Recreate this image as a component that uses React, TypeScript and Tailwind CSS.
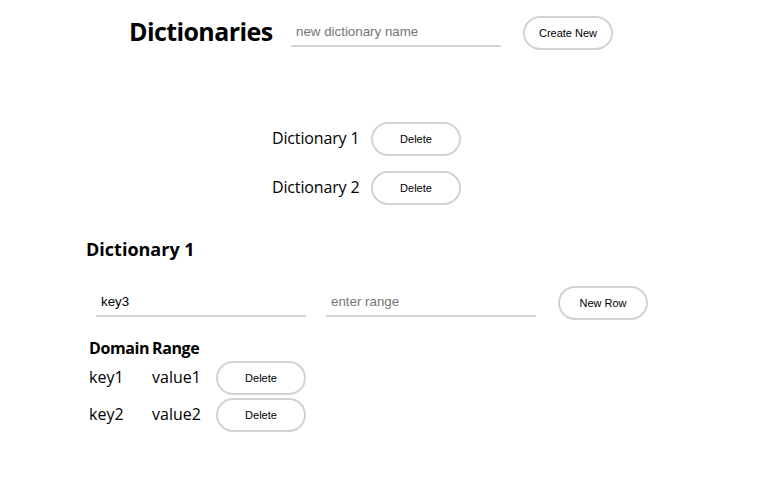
import React from "react";

const btn =
  "w-[90px] h-[34px] shrink-0 rounded-full border-2 border-[#d3d3d3] bg-white text-[11px] text-black font-['Liberation_Sans',Arial,sans-serif] box-border";
const inp =
  "w-[210px] h-[29px] shrink-0 mb-[2px] border-0 border-b-2 border-[#d3d3d3] bg-transparent px-[5px] text-[13.33px] text-black outline-none font-['Liberation_Sans',Arial,sans-serif] placeholder:text-[#757575] box-border";

export default function App() {
  return (
    <div className="w-[781px] h-[478px] bg-white text-black font-['Open_Sans','Noto_Sans',sans-serif] overflow-hidden">
      <div className="flex items-center pl-[129px] pt-[16px]">
        <h1 className="w-[162px] shrink-0 mb-[3px] text-[25px] font-bold leading-none tracking-[-0.6px]">Dictionaries</h1>
        <input className={inp} placeholder="new dictionary name" />
        <button className={`${btn} ml-[22px]`}>Create New</button>
      </div>

      <div className="flex flex-col gap-[15px] pl-[272px] mt-[72px]">
        {["Dictionary 1", "Dictionary 2"].map((d) => (
          <div key={d} className="flex items-center">
            <span className="w-[99px] mb-[3px] text-[16px] leading-none tracking-[-0.15px]">{d}</span>
            <button className={btn}>Delete</button>
          </div>
        ))}
      </div>

      <h2 className="pl-[86px] mt-[35px] text-[18px] font-bold leading-[18px]">Dictionary 1</h2>

      <div className="flex items-center pl-[96px] mt-[28px]">
        <input className={inp} defaultValue="key3" />
        <input className={`${inp} ml-[20px]`} placeholder="enter range" />
        <button className={`${btn} ml-[22px]`}>New Row</button>
      </div>

      <div className="pl-[89px] mt-[18px] grid grid-cols-[63px_64px_90px] gap-y-[3px] items-center text-[16px]">
        <div className="font-bold leading-[20px] tracking-[-0.4px]">Domain</div>
        <div className="font-bold leading-[20px] tracking-[-0.4px]">Range</div>
        <div />
        <div className="mb-[2px]">key1</div>
        <div className="mb-[2px]">value1</div>
        <button className={btn}>Delete</button>
        <div className="mb-[2px]">key2</div>
        <div className="mb-[2px]">value2</div>
        <button className={btn}>Delete</button>
      </div>
    </div>
  );
}
